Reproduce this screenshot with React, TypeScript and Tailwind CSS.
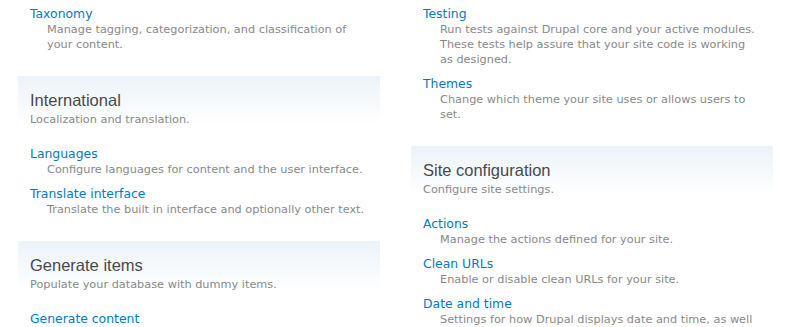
type Item = { title: string; desc: string };
type Section = { heading?: string; desc?: string; items: Item[] };

const left: Section[] = [
  {
    items: [
      {
        title: "Taxonomy",
        desc: "Manage tagging, categorization, and classification of your content.",
      },
    ],
  },
  {
    heading: "International",
    desc: "Localization and translation.",
    items: [
      { title: "Languages", desc: "Configure languages for content and the user interface." },
      { title: "Translate interface", desc: "Translate the built in interface and optionally other text." },
    ],
  },
  {
    heading: "Generate items",
    desc: "Populate your database with dummy items.",
    items: [{ title: "Generate content", desc: "" }],
  },
];

const right: Section[] = [
  {
    items: [
      {
        title: "Testing",
        desc: "Run tests against Drupal core and your active modules. These tests help assure that your site code is working as designed.",
      },
      { title: "Themes", desc: "Change which theme your site uses or allows users to set." },
    ],
  },
  {
    heading: "Site configuration",
    desc: "Configure site settings.",
    items: [
      { title: "Actions", desc: "Manage the actions defined for your site." },
      { title: "Clean URLs", desc: "Enable or disable clean URLs for your site." },
      { title: "Date and time", desc: "Settings for how Drupal displays date and time, as well" },
    ],
  },
];

const ItemRow = ({ item }: { item: Item }) => (
  <div className="mb-[9px]">
    <a className="block text-[12.4px] leading-[16px] text-[#027ac6]">{item.title}</a>
    {item.desc && (
      <p className="pl-[17px] text-[11.3px] leading-[15px] text-[#898989]">{item.desc}</p>
    )}
  </div>
);

const Block = ({ section }: { section: Section }) => (
  <div className="mb-[24px]">
    {section.heading && (
      <div className="bg-gradient-to-b from-[#ebf3f9] to-white to-70% px-3 pt-[15px] pb-[19px]">
        <h3 className="font-['Liberation_Sans',Arial,sans-serif] text-[16.5px] leading-[19px] text-[#494949]">
          {section.heading}
        </h3>
        <p className="text-[11.3px] leading-[15px] text-[#898989] pt-[2px]">{section.desc}</p>
      </div>
    )}
    <div className="px-3">
      {section.items.map((it, i) => (
        <ItemRow key={i} item={it} />
      ))}
    </div>
  </div>
);

export default function App() {
  return (
    <div className="w-[794px] h-[327px] overflow-hidden bg-white font-['DejaVu_Sans',Verdana,sans-serif]">
      <div className="flex gap-[31px] pl-[18px] pt-[6px]">
        <div className="w-[362px]">
          {left.map((s, i) => (
            <Block key={i} section={s} />
          ))}
        </div>
        <div className="w-[362px]">
          {right.map((s, i) => (
            <Block key={i} section={s} />
          ))}
        </div>
      </div>
    </div>
  );
}
